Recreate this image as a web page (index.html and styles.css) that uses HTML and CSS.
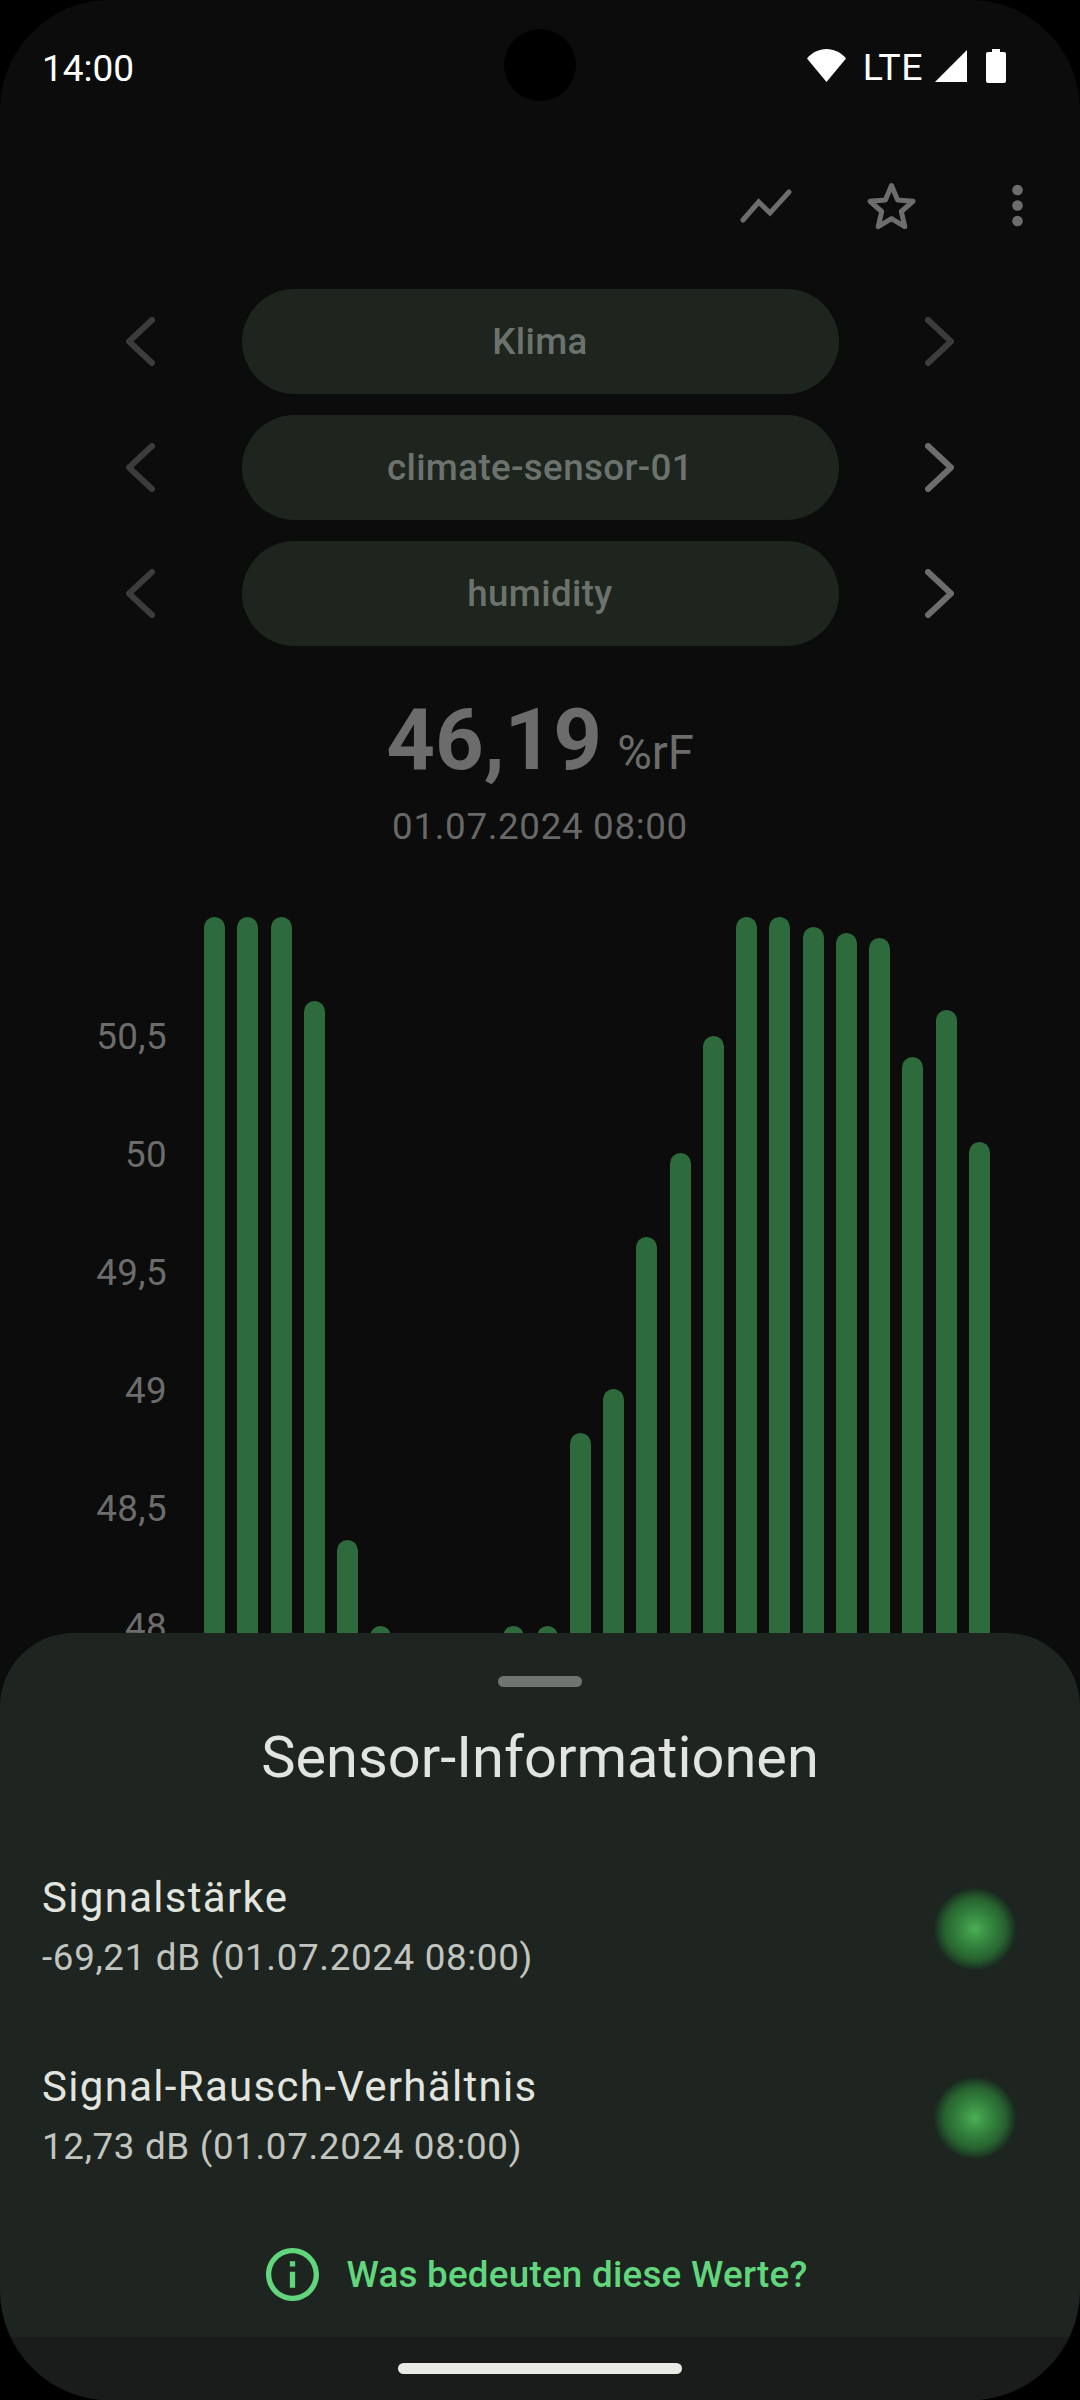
FILE: index.html
```html
<!DOCTYPE html>
<html lang="de">
<head>
<meta charset="utf-8">
<title>Sensor-Informationen</title>
<link rel="stylesheet" href="styles.css">
</head>
<body>
<div class="screen">
  <div class="camera"></div>
  <header class="status">
    <span class="clock">14:00</span>
    <div class="status-icons">
      <svg class="wifi" viewBox="0 0 39 33"><path d="M19.5 33 0 9.500C5 3.500 12 0 19.500 0S34 3.500 39 9.500z"/></svg>
      <span class="lte">LTE</span>
      <svg class="signal" viewBox="0 0 32 32"><path d="M32 0v32H0z"/></svg>
      <svg class="battery" viewBox="0 0 20 34"><path d="M6 0h8v3h4a2 2 0 0 1 2 2v27a2 2 0 0 1-2 2H2a2 2 0 0 1-2-2V5a2 2 0 0 1 2-2h4z"/></svg>
    </div>
  </header>
  <nav class="toolbar">
    <svg class="tool line" viewBox="0 0 63 63"><path d="M9 46 24.700 28 36 39 55 18"/></svg>
    <svg class="tool star" viewBox="0 0 63 63"><path d="M31.500 11.500 37.600 26 53 27.300 41.300 37.500 44.800 52.600 31.500 44.600 18.200 52.600 21.700 37.500 10 27.300 25.400 26z"/></svg>
    <svg class="tool dots" viewBox="0 0 63 63"><circle cx="31.500" cy="16" r="5.300"/><circle cx="31.500" cy="31.500" r="5.300"/><circle cx="31.500" cy="47" r="5.300"/></svg>
  </nav>
  <section class="selectors">
    <div class="sel-row">
      <svg class="chev dim" viewBox="0 0 29 49"><path d="M26 3 3 24.500 26 46"/></svg>
      <div class="pill">Klima</div>
      <svg class="chev dim" viewBox="0 0 29 49"><path d="M3 3 26 24.500 3 46"/></svg>
    </div>
    <div class="sel-row">
      <svg class="chev dim" viewBox="0 0 29 49"><path d="M26 3 3 24.500 26 46"/></svg>
      <div class="pill">climate-sensor-01</div>
      <svg class="chev" viewBox="0 0 29 49"><path d="M3 3 26 24.500 3 46"/></svg>
    </div>
    <div class="sel-row">
      <svg class="chev dim" viewBox="0 0 29 49"><path d="M26 3 3 24.500 26 46"/></svg>
      <div class="pill">humidity</div>
      <svg class="chev" viewBox="0 0 29 49"><path d="M3 3 26 24.500 3 46"/></svg>
    </div>
  </section>
  <section class="reading">
    <div class="value"><span class="num">46,19</span><span class="unit">%rF</span></div>
    <div class="stamp">01.07.2024 08:00</div>
  </section>
  <section class="chart">
    <div class="axis">
      <span>50,5</span><span>50</span><span>49,5</span><span>49</span><span>48,5</span><span>48</span>
    </div>
    <div class="bars">
      <i class="bar" style="height:783px"></i>
      <i class="bar" style="height:783px"></i>
      <i class="bar" style="height:783px"></i>
      <i class="bar" style="height:699px"></i>
      <i class="bar" style="height:160px"></i>
      <i class="bar" style="height:74px"></i>
      <i class="gap"></i>
      <i class="gap"></i>
      <i class="gap"></i>
      <i class="bar" style="height:74px"></i>
      <i class="bar" style="height:74px"></i>
      <i class="bar" style="height:267px"></i>
      <i class="bar" style="height:311px"></i>
      <i class="bar" style="height:463px"></i>
      <i class="bar" style="height:547px"></i>
      <i class="bar" style="height:664px"></i>
      <i class="bar" style="height:783px"></i>
      <i class="bar" style="height:783px"></i>
      <i class="bar" style="height:773px"></i>
      <i class="bar" style="height:767px"></i>
      <i class="bar" style="height:762px"></i>
      <i class="bar" style="height:643px"></i>
      <i class="bar" style="height:690px"></i>
      <i class="bar" style="height:558px"></i>
    </div>
  </section>
  <aside class="sheet">
    <div class="handle"></div>
    <h2 class="sheet-title">Sensor-Informationen</h2>
    <div class="info-row">
      <div class="info-text">
        <div class="info-name">Signalstärke</div>
        <div class="info-val">-69,21 dB (01.07.2024 08:00)</div>
      </div>
      <div class="glow"></div>
    </div>
    <div class="info-row">
      <div class="info-text">
        <div class="info-name">Signal-Rausch-Verhältnis</div>
        <div class="info-val">12,73 dB (01.07.2024 08:00)</div>
      </div>
      <div class="glow"></div>
    </div>
    <div class="help">
      <svg class="help-ico" viewBox="2 2 20 20"><path d="M11 7h2v2h-2V7zm0 4h2v6h-2v-6zm1-9C6.480 2 2 6.480 2 12s4.480 10 10 10 10-4.480 10-10S17.520 2 12 2zm0 18c-4.410 0-8-3.590-8-8s3.590-8 8-8 8 3.590 8 8-3.590 8-8 8z"/></svg>
      <span>Was bedeuten diese Werte?</span>
    </div>
    <div class="navbar"><div class="home"></div></div>
  </aside>
</div>
</body>
</html>
```
FILE: styles.css
```css
* { box-sizing: border-box; }
html, body { margin: 0; padding: 0; background: #000; }
body { width: 1080px; height: 2400px; overflow: hidden; font-family: Roboto, sans-serif; }
.screen {
  position: relative;
  width: 1080px;
  height: 2400px;
  background: #0b0c0b;
  border-radius: 110px;
  overflow: hidden;
  display: flex;
  flex-direction: column;
}
.camera {
  position: absolute;
  left: 504px;
  top: 29px;
  width: 72px;
  height: 72px;
  border-radius: 50%;
  background: #000;
}
.status {
  height: 132px;
  padding: 0 74px 0 42px;
  display: flex;
  align-items: flex-start;
  justify-content: space-between;
  color: #fff;
}
.clock { font-size: 37px; line-height: 43px; margin-top: 47px; }
.status-icons { display: flex; align-items: flex-start; margin-top: 49px; }
.status-icons svg { fill: #fff; display: block; }
.wifi { width: 39px; height: 33px; }
.lte { font-size: 37.5px; line-height: 36px; margin: 0 12px 0 17px; letter-spacing: 0.5px; }
.signal { width: 32px; height: 32px; margin-top: 1px; }
.battery { width: 20px; height: 34px; margin-left: 19px; }
.toolbar {
  height: 157px;
  padding: 42px 31px 0 0;
  display: flex;
  justify-content: flex-end;
  gap: 63px;
}
.tool { width: 63px; height: 63px; display: block; fill: #6d6d6d; }
.line { fill: none; stroke: #6d6d6d; stroke-width: 5; stroke-linecap: round; stroke-linejoin: miter; }
.star { fill: none; stroke: #6d6d6d; stroke-width: 5; stroke-linejoin: round; }
.selectors { display: flex; flex-direction: column; gap: 21px; }
.sel-row { display: flex; align-items: center; justify-content: center; gap: 86.5px; height: 105px; }
.chev { width: 29px; height: 49px; flex: none; fill: none; stroke: #6d6d6d; stroke-width: 6; stroke-linecap: round; stroke-linejoin: round; }
.chev.dim { stroke: #3c3c3c; }
.pill {
  width: 597px;
  height: 105px;
  flex: none;
  border-radius: 52.5px;
  background: #1d251e;
  color: #6c726d;
  font-size: 36.75px;
  font-weight: 500;
  line-height: 105px;
  letter-spacing: 0.35px;
  text-align: center;
}
.reading { text-align: center; margin-top: 44.5px; }
.value { display: flex; justify-content: center; align-items: baseline; gap: 15px; height: 98px; line-height: 98px; color: #6c6c6c; }
.num { font-size: 85px; font-weight: 700; }
.unit { font-size: 47.25px; }
.stamp { color: #686868; font-size: 36.75px; line-height: 44px; letter-spacing: 0.66px; margin-top: 16px; }
.chart { position: relative; flex: none; height: 851.5px; }
.axis {
  position: absolute;
  top: 129px;
  right: 913px;
  display: flex;
  flex-direction: column;
  color: #6c6c6c;
  font-size: 36.75px;
  letter-spacing: 0.4px;
  line-height: 118px;
  text-align: right;
}
.bars {
  position: absolute;
  left: 204px;
  bottom: 0;
  height: 100%;
  display: flex;
  gap: 12.25px;
  align-items: flex-end;
}
.bar, .gap { display: block; width: 21px; flex: none; }
.bar { background: #2e6b3c; border-radius: 10.5px 10.5px 0 0; }
.sheet {
  position: absolute;
  left: 0;
  right: 0;
  bottom: 0;
  height: 767px;
  background: #1e2420;
  border-radius: 73.5px 73.5px 0 0;
  display: flex;
  flex-direction: column;
}
.handle { width: 84px; height: 10.5px; border-radius: 6px; background: #6f7570; margin: 43px auto 0; }
.sheet-title { margin: 34.5px 0 0; text-align: center; color: #e2e4df; font-size: 57.75px; font-weight: 400; line-height: 72px; }
.info-row { display: flex; justify-content: space-between; align-items: center; padding: 0 63px 0 42px; height: 189px; flex: none; }
.sheet-title + .info-row { margin-top: 41px; }
.info-name { color: #e2e4df; font-size: 42px; line-height: 58px; letter-spacing: 1.3px; }
.info-val { color: #c2c5bf; font-size: 36.75px; line-height: 61px; letter-spacing: 0.66px; }
.glow {
  width: 84px;
  height: 84px;
  border-radius: 50%;
  background: radial-gradient(circle closest-side, #4cb055 0%, #3c9346 25%, #2f7a3a 50%, #28632f 72%, #1f4026 88%, #1b2c20 96%, #1e2420 100%);
}
.help { display: flex; align-items: center; justify-content: center; gap: 27px; color: #62d67c; font-size: 36.75px; font-weight: 500; letter-spacing: 0.25px; height: 100px; margin-top: 12.5px; padding-right: 6px; }
.help-ico { width: 53px; height: 53px; fill: #62d67c; display: block; }
.navbar { margin-top: auto; height: 63px; background: #191c1a; display: flex; justify-content: center; padding-top: 26px; }
.home { width: 284px; height: 11px; border-radius: 6px; background: #e8eae6; }
```
